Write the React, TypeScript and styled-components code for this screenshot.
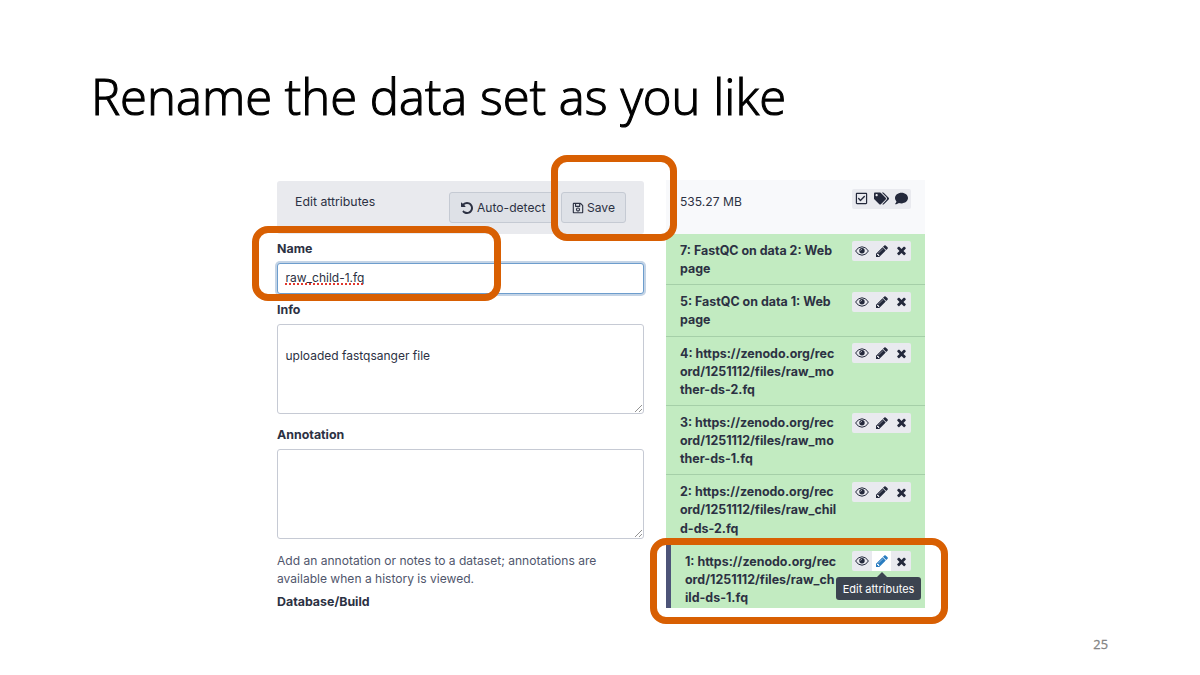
import React from "react";
import styled, { createGlobalStyle, css } from "styled-components";
import { FaRegSave, FaRegCheckSquare, FaTags, FaComment } from "react-icons/fa";

const GlobalStyle = createGlobalStyle`
  * { box-sizing: border-box; }
  body { margin: 0; background: #fff; overflow: hidden; }
`;

const Slide = styled.main`
  position: relative;
  width: 1200px;
  height: 675px;
  display: flex;
  flex-direction: column;
  background: #fff;
  font-family: Inter, "Liberation Sans", sans-serif;
  font-size: 12.3px;
  line-height: 18.1px;
  color: #2c3143;
`;

const Title = styled.h1`
  flex: none;
  margin: 0;
  padding: 60px 0 0 91px;
  height: 180px;
  font-family: "Open Sans", "Noto Sans", sans-serif;
  font-weight: 300;
  font-size: 49px;
  line-height: 72px;
  color: #000;
  -webkit-text-stroke: 1.1px #000;
  white-space: nowrap;
`;

const Content = styled.section`
  display: flex;
  flex: none;
  gap: 22px;
  height: 428px;
  padding-left: 277px;
`;

const Form = styled.div`
  width: 367px;
  padding-top: 1px;
  display: flex;
  flex-direction: column;
  & > * { flex: none; }
`;

const FormHeader = styled.header`
  display: flex;
  justify-content: space-between;
  height: 53px;
  padding: 11px 18px 0;
  border-radius: 3px;
  background: #e9eaee;
`;

const HeaderTitle = styled.span`
  padding-top: 1px;
  white-space: nowrap;
`;

const Buttons = styled.div`
  display: flex;
  gap: 3px;
`;

const Button = styled.button<{ $width: number }>`
  display: flex;
  align-items: center;
  gap: 3px;
  width: ${(p) => p.$width}px;
  height: 31px;
  padding: 1px 10px 0;
  border: 1px solid #c5cad3;
  border-radius: 3px;
  background: #dee1e7;
  color: #2c3143;
  font: inherit;
  font-size: 12.1px;
  white-space: nowrap;
  svg { flex: none; }
`;

const Label = styled.label<{ $top: number }>`
  margin-top: ${(p) => p.$top}px;
  height: 18px;
  line-height: 18px;
  font-weight: 700;
  font-size: 12.4px;
`;

const fieldBox = css`
  border: 1px solid #c6cad4;
  border-radius: 3px;
  background: #fff;
  padding: 5px 7.5px;
  font-size: 12px;
`;

const NameField = styled.div`
  ${fieldBox}
  height: 31px;
  margin-top: 5px;
  border-color: #6d9dcd;
  box-shadow: 0 0 0 2px #c4d4e6;
  span {
    text-decoration: underline dotted #e0382e 1.5px;
    text-underline-offset: 1px;
    text-decoration-skip-ink: none;
  }
`;

const Area = styled.div`
  ${fieldBox}
  position: relative;
  height: 90px;
  margin-top: 5px;
  padding-top: 22px;
`;

const Grip = styled.svg`
  position: absolute;
  right: 0;
  bottom: 0;
`;

const Help = styled.p`
  margin: 13px 0 0;
  color: #50566c;
  font-size: 12.05px;
  white-space: nowrap;
`;

const History = styled.aside`
  width: 259px;
  display: flex;
  flex-direction: column;
  overflow: hidden;
`;

const HistoryHeader = styled.header`
  display: flex;
  justify-content: space-between;
  flex: none;
  height: 54px;
  padding: 10px 14px 0;
  background: #f8f9fb;
`;

const Size = styled.span`
  padding-top: 3px;
  font-size: 12.1px;
`;

const Item = styled.article<{ $active?: boolean }>`
  display: flex;
  justify-content: space-between;
  flex: none;
  padding: 8px 14px 6.1px;
  border-bottom: 1px solid #a5cfa8;
  background: #c2ebc1;
  ${(p) => p.$active && css`
    border-left: 5px solid #4d5478;
    border-bottom: 0;
    height: 66px;
  `}
`;

const Name = styled.div`
  font-weight: 700;
  font-size: 12.43px;
  white-space: pre;
  width: 0;
`;

const Actions = styled.div`
  display: flex;
  flex: none;
  width: 59px;
  height: 20px;
  margin-top: -1.3px;
  border-radius: 2px;
  overflow: hidden;
  background: #e9eaef;
`;

const Action = styled.span<{ $hot?: boolean }>`
  display: flex;
  align-items: center;
  justify-content: center;
  width: 20px;
  color: ${(p) => (p.$hot ? "#2a7cc0" : "#23283b")};
  background: ${(p) => (p.$hot ? "#fff" : "transparent")};
`;

const PageNumber = styled.footer`
  position: absolute;
  right: 92px;
  top: 635px;
  font-family: "Open Sans", sans-serif;
  font-size: 12.8px;
  color: #858585;
  -webkit-text-stroke: 0.3px #858585;
`;

const Callout = styled.div<{ $x: number; $y: number; $w: number; $h: number }>`
  position: absolute;
  left: ${(p) => p.$x}px;
  top: ${(p) => p.$y}px;
  width: ${(p) => p.$w}px;
  height: ${(p) => p.$h}px;
  border: 7px solid #d85f02;
  border-radius: 16px;
`;

const Tooltip = styled.div`
  position: absolute;
  left: 836px;
  top: 577px;
  width: 85px;
  height: 23px;
  border-radius: 3px;
  background: #3c4450;
  color: #fff;
  font-size: 11px;
  line-height: 24px;
  text-align: center;
  white-space: nowrap;
  &::before {
    content: "";
    position: absolute;
    left: 41px;
    top: -5px;
    border: 5px solid transparent;
    border-top: 0;
    border-bottom-color: #3c4450;
  }
`;

const glyphs = {
  pencil: "M491 1536l91-91-235-235-91 91v107h128v128h107zm523-928q0-22-22-22-10 0-17 7l-542 542q-7 7-7 17 0 22 22 22 10 0 17-7l542-542q7-7 7-17zm-54-192l416 416-832 832h-416v-416zm683 96q0 53-37 90l-166 166-416-416 166-165q36-38 90-38 53 0 91 38l235 234q37 39 37 91z",
  times: "M1490 1322q0 40-28 68l-136 136q-28 28-68 28t-68-28l-294-294-294 294q-28 28-68 28t-68-28l-136-136q-28-28-28-68t28-68l294-294-294-294q-28-28-28-68t28-68l136-136q28-28 68-28t68 28l294 294 294-294q28-28 68-28t68 28l136 136q28 28 28 68t-28 68l-294 294 294 294q28 28 28 68z",
  undo: "M1664 896q0 156-61 298t-164 245-245 164-298 61q-172 0-327-72.5t-264-204.5q-7-10-6.5-22.5t8.5-20.5l137-138q10-9 25-9 16 2 23 12 73 95 179 147t225 52q104 0 198.5-40.5t163.5-109.5 109.5-163.5 40.5-198.5-40.5-198.5-109.5-163.5-163.5-109.5-198.5-40.5q-98 0-188 35.5t-160 101.5l137 138q31 30 14 69-17 40-59 40h-448q-26 0-45-19t-19-45v-448q0-42 40-59 39-17 69 14l130 129q107-101 244.5-156.5t284.5-55.5q156 0 298 61t245 164 164 245 61 298z",
};

const Glyph = ({ name, size }: { name: keyof typeof glyphs; size: number }) => (
  <svg width={size} height={size} viewBox="0 0 1792 1792" fill="currentColor">
    <path d={glyphs[name]} />
  </svg>
);

const Eye = () => (
  <svg width="14" height="10" viewBox="0 0 14 10" fill="none" stroke="currentColor">
    <path d="M0.6 5Q3 0.8 7 0.8T13.4 5Q11 9.2 7 9.2T0.6 5Z" strokeWidth="1" />
    <circle cx="7" cy="4.8" r="2.7" fill="currentColor" stroke="none" />
    <path d="M5.6 4.6Q5.7 3.4 6.9 3.3" stroke="#e9eaef" strokeWidth="0.7" />
  </svg>
);

const items = [
  "7: FastQC on data 2: Web\npage",
  "5: FastQC on data 1: Web\npage",
  "4: https://zenodo.org/rec\nord/1251112/files/raw_mo\nther-ds-2.fq",
  "3: https://zenodo.org/rec\nord/1251112/files/raw_mo\nther-ds-1.fq",
  "2: https://zenodo.org/rec\nord/1251112/files/raw_chil\nd-ds-2.fq",
  "1: https://zenodo.org/rec\nord/1251112/files/raw_ch\nild-ds-1.fq",
];

const ResizeGrip = () => (
  <Grip width="9" height="9" viewBox="0 0 9 9" stroke="#777" strokeWidth="0.8">
    <path d="M1 8L8 1M5 8L8 5" />
  </Grip>
);

export default function App() {
  return (
    <Slide>
      <GlobalStyle />
      <Title>Rename the data set as you like</Title>
      <Content>
        <Form>
          <FormHeader>
            <HeaderTitle>Edit attributes</HeaderTitle>
            <Buttons>
              <Button $width={109}><Glyph name="undo" size={14} />Auto-detect</Button>
              <Button $width={65}><FaRegSave size={12} />Save</Button>
            </Buttons>
          </FormHeader>
          <Label $top={6}>Name</Label>
          <NameField><span>raw_child-1.fq</span></NameField>
          <Label $top={7}>Info</Label>
          <Area>uploaded fastqsanger file<ResizeGrip /></Area>
          <Label $top={12}>Annotation</Label>
          <Area><ResizeGrip /></Area>
          <Help>Add an annotation or notes to a dataset; annotations are<br />available when a history is viewed.</Help>
          <Label $top={5}>Database/Build</Label>
        </Form>
        <History>
          <HistoryHeader>
            <Size>535.27 MB</Size>
            <Actions>
              <Action><FaRegCheckSquare size={13} /></Action>
              <Action><FaTags size={15} /></Action>
              <Action><FaComment size={13} /></Action>
            </Actions>
          </HistoryHeader>
          {items.map((name, i) => {
            const active = i === items.length - 1;
            return (
              <Item key={name} $active={active}>
                <Name>{name}</Name>
                <Actions>
                  <Action><Eye /></Action>
                  <Action $hot={active}><Glyph name="pencil" size={14} /></Action>
                  <Action><Glyph name="times" size={13} /></Action>
                </Actions>
              </Item>
            );
          })}
        </History>
      </Content>
      <Tooltip>Edit attributes</Tooltip>
      <Callout $x={551} $y={155} $w={126} $h={86} />
      <Callout $x={252} $y={226} $w={249} $h={75} />
      <Callout $x={650} $y={538} $w={298} $h={86} />
      <PageNumber>25</PageNumber>
    </Slide>
  );
}
